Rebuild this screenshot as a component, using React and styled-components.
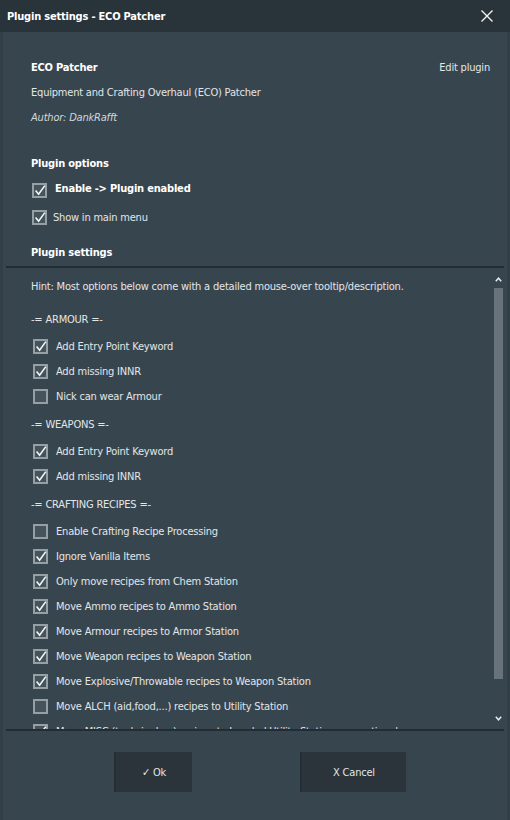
import React from 'react';
import styled, { createGlobalStyle } from 'styled-components';

const GlobalStyle = createGlobalStyle`
  html, body {
    margin: 0;
    padding: 0;
    background: #37454e;
  }
  body {
    font-family: "DejaVu Sans Condensed", "Liberation Sans", sans-serif;
    font-size: 11px;
    letter-spacing: -0.2px;
    color: #e3e6e8;
  }
`;

const Window = styled.div`
  width: 510px;
  height: 820px;
  display: flex;
  flex-direction: column;
  background: #37454e;
  overflow: hidden;
`;

const TitleBar = styled.div`
  flex: 0 0 32px;
  background: #29333a;
  display: flex;
  align-items: center;
  justify-content: space-between;
  padding: 0 17px 0 7px;
  font-weight: bold;
  color: #fff;
`;

const Body = styled.div`
  flex: 1;
  display: flex;
  flex-direction: column;
  border-left: 3px solid #323f47;
  border-right: 3px solid #323f47;
`;

const Intro = styled.div`
  padding: 23px 17px 0 28px;
  display: flex;
  flex-direction: column;
`;

const Row = styled.div`
  height: 25px;
  flex-shrink: 0;
  display: flex;
  align-items: center;
  justify-content: space-between;
  margin-top: ${p => p.$top || 0}px;
  font-weight: ${p => (p.$bold ? 'bold' : 'normal')};
  font-style: ${p => (p.$italic ? 'italic' : 'normal')};
  color: ${p => (p.$italic ? '#d3d8db' : p.$bold ? '#fff' : '#e3e6e8')};
`;

const EditLink = styled.span`
  font-weight: normal;
  color: #e3e6e8;
`;

const CheckRow = styled.div`
  height: 25px;
  flex-shrink: 0;
  display: flex;
  align-items: center;
  gap: ${p => p.$gap || 8}px;
  padding-left: ${p => p.$indent || 0}px;
  margin-top: ${p => p.$top || 0}px;
  font-weight: ${p => (p.$bold ? 'bold' : 'normal')};
  color: ${p => (p.$bold ? '#fff' : '#e3e6e8')};
  white-space: nowrap;
`;

const Box = styled.span`
  display: inline-flex;
  width: 15px;
  height: 15px;
  flex: 0 0 15px;
  margin-top: ${p => p.$drop || 0}px;
`;

const Line = styled.div`
  height: 2px;
  flex-shrink: 0;
  margin: ${p => p.$top || 0}px 3px 0 3px;
  background: #232c32;
`;

const Panel = styled.div`
  height: 461px;
  flex-shrink: 0;
  margin: 0 3px;
  display: flex;
  overflow: hidden;
`;

const List = styled.div`
  flex: 1;
  padding: 6px 0 0 25px;
  display: flex;
  flex-direction: column;
`;

const Hint = styled.div`
  height: 25px;
  flex-shrink: 0;
  display: flex;
  align-items: center;
  margin-bottom: 5px;
`;

const GroupTitle = styled.div`
  height: 25px;
  flex-shrink: 0;
  display: flex;
  align-items: center;
  margin: 3px 0 2px 0;
`;

const ScrollBar = styled.div`
  width: 9px;
  margin-right: 1px;
  display: flex;
  flex-direction: column;
  align-items: center;
`;

const Arrow = styled.span`
  display: flex;
  height: 8px;
  margin-top: ${p => p.$top || 0}px;
`;

const Thumb = styled.div`
  width: 9px;
  height: 391px;
  margin-top: 3px;
  background: #67727a;
`;

const Footer = styled.div`
  display: flex;
  gap: 108px;
  padding: 21px 0 0 111px;
`;

const Button = styled.button`
  width: ${p => p.$w}px;
  height: 40px;
  border: none;
  border-left: 2px solid #252e34;
  background: #2a343a;
  color: #e3e6e8;
  font: inherit;
  letter-spacing: inherit;
  display: flex;
  align-items: center;
  justify-content: center;
  padding: 0;
`;

const CheckBox = ({ checked, drop }) => (
  <Box $drop={drop}>
    <svg width="15" height="15" viewBox="0 0 15 15">
      <rect x="1" y="1" width="13" height="13" fill="#45535c" stroke="#959fa4" strokeWidth="2" />
      {checked && (
        <path d="M3.6 7.6 L6.6 11.2 L12.8 2.6" fill="none" stroke="#f4f6f7" strokeWidth="1.6" />
      )}
    </svg>
  </Box>
);

const CloseIcon = () => (
  <svg width="12" height="12" viewBox="0 0 12 12">
    <path d="M0.5 0.5 L11.5 11.5 M11.5 0.5 L0.5 11.5" stroke="#f2f2f2" strokeWidth="1.4" />
  </svg>
);

const groups = [
  {
    title: '-= ARMOUR =-',
    items: [
      ['Add Entry Point Keyword', true],
      ['Add missing INNR', true],
      ['Nick can wear Armour', false],
    ],
  },
  {
    title: '-= WEAPONS =-',
    items: [
      ['Add Entry Point Keyword', true],
      ['Add missing INNR', true],
    ],
  },
  {
    title: '-= CRAFTING RECIPES =-',
    items: [
      ['Enable Crafting Recipe Processing', false],
      ['Ignore Vanilla Items', true],
      ['Only move recipes from Chem Station', true],
      ['Move Ammo recipes to Ammo Station', true],
      ['Move Armour recipes to Armor Station', true],
      ['Move Weapon recipes to Weapon Station', true],
      ['Move Explosive/Throwable recipes to Weapon Station', true],
      ['Move ALCH (aid,food,...) recipes to Utility Station', false],
      ['Move MISC (tools,junk,...) recipes to Leveled Utility Station, see optional', true],
    ],
  },
];

export default function App() {
  return (
    <Window>
      <GlobalStyle />
      <TitleBar>
        <span>Plugin settings - ECO Patcher</span>
        <CloseIcon />
      </TitleBar>
      <Body>
        <Intro>
          <Row $bold>
            <span>ECO Patcher</span>
            <EditLink>Edit plugin</EditLink>
          </Row>
          <Row>Equipment and Crafting Overhaul (ECO) Patcher</Row>
          <Row $italic>Author: DankRafft</Row>
          <Row $bold $top={21}>Plugin options</Row>
          <CheckRow $bold $gap={8} $indent={1}>
            <CheckBox checked drop={4} />
            <span>Enable -&gt; Plugin enabled</span>
          </CheckRow>
          <CheckRow $top={4} $gap={6} $indent={1}>
            <CheckBox checked />
            <span>Show in main menu</span>
          </CheckRow>
          <Row $bold $top={10}>Plugin settings</Row>
        </Intro>
        <Line $top={1} />
        <Panel>
          <List>
            <Hint>Hint: Most options below come with a detailed mouse-over tooltip/description.</Hint>
            {groups.map(g => (
              <React.Fragment key={g.title}>
                <GroupTitle>{g.title}</GroupTitle>
                {g.items.map(([label, checked]) => (
                  <CheckRow key={label} $indent={2}>
                    <CheckBox checked={checked} />
                    <span>{label}</span>
                  </CheckRow>
                ))}
              </React.Fragment>
            ))}
          </List>
          <ScrollBar>
            <Arrow $top={9}>
              <svg width="7" height="5" viewBox="0 0 7 5">
                <path d="M0.8 4.2 L3.5 1.2 L6.2 4.2" fill="none" stroke="#e8ecee" strokeWidth="1.5" />
              </svg>
            </Arrow>
            <Thumb />
            <Arrow $top={37}>
              <svg width="7" height="5" viewBox="0 0 7 5">
                <path d="M0.8 0.8 L3.5 3.8 L6.2 0.8" fill="none" stroke="#e8ecee" strokeWidth="1.5" />
              </svg>
            </Arrow>
          </ScrollBar>
        </Panel>
        <Line />
        <Footer>
          <Button $w={78}>✓ Ok</Button>
          <Button $w={106}>X Cancel</Button>
        </Footer>
      </Body>
    </Window>
  );
}
